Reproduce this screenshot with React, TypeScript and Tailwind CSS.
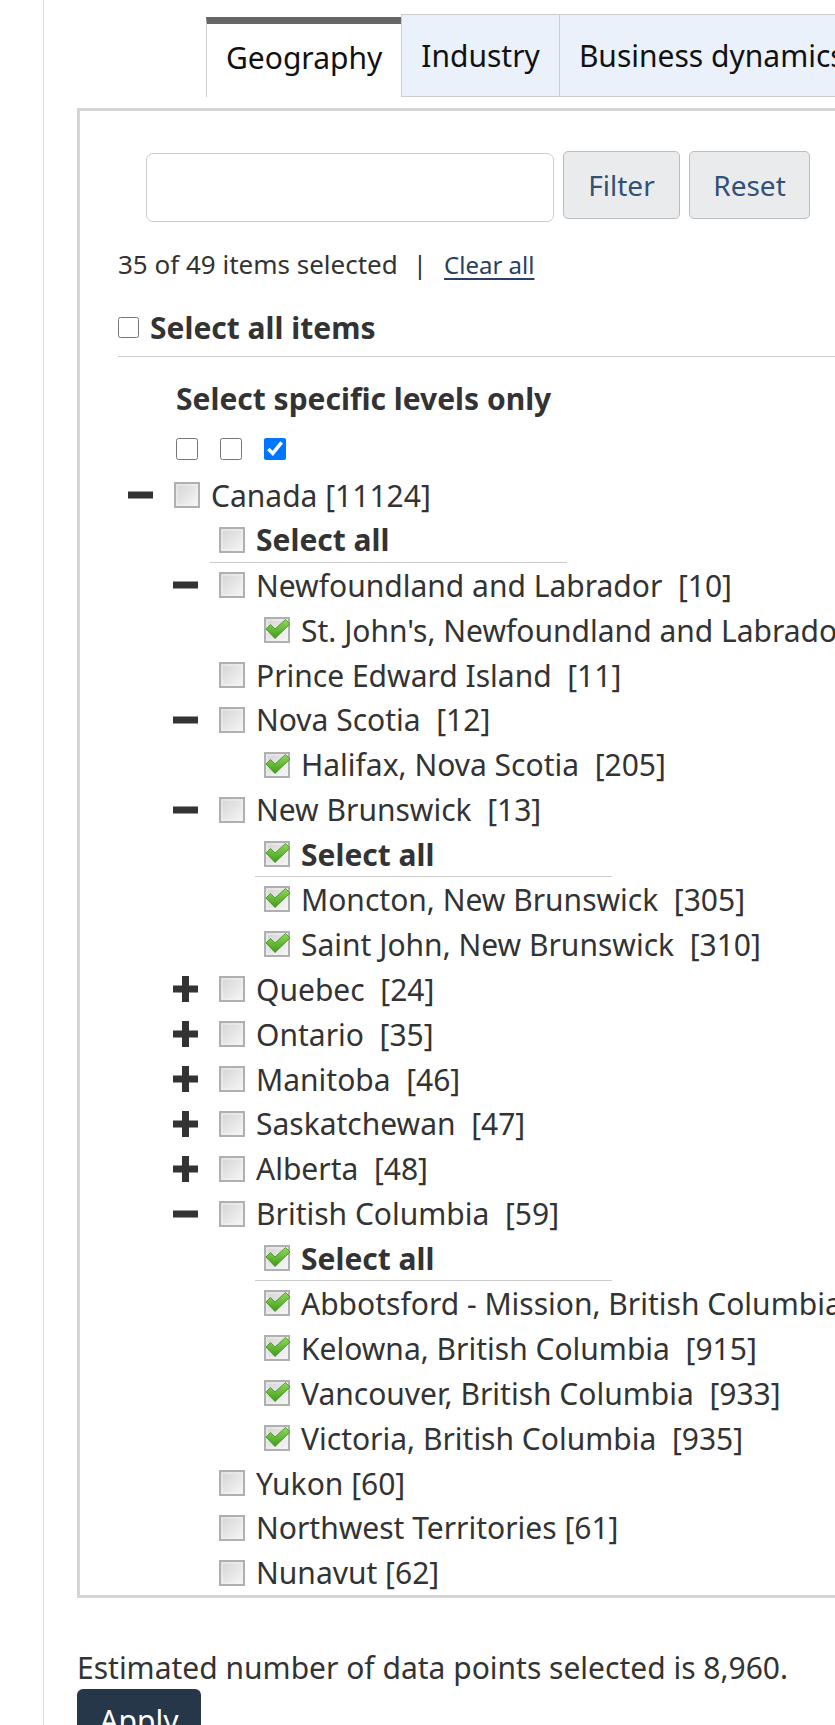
import React from "react";

type Row = {
  level: 1 | 2 | 3;
  toggle?: "minus" | "plus";
  kind?: "selectall";
  checked?: boolean;
  label?: string;
};

const rows: Row[] = [
  { level: 1, toggle: "minus", label: "Canada [11124]" },
  { level: 2, kind: "selectall" },
  { level: 2, toggle: "minus", label: "Newfoundland and Labrador  [10]" },
  { level: 3, checked: true, label: "St. John's, Newfoundland and Labrador  [1]" },
  { level: 2, label: "Prince Edward Island  [11]" },
  { level: 2, toggle: "minus", label: "Nova Scotia  [12]" },
  { level: 3, checked: true, label: "Halifax, Nova Scotia  [205]" },
  { level: 2, toggle: "minus", label: "New Brunswick  [13]" },
  { level: 3, kind: "selectall", checked: true },
  { level: 3, checked: true, label: "Moncton, New Brunswick  [305]" },
  { level: 3, checked: true, label: "Saint John, New Brunswick  [310]" },
  { level: 2, toggle: "plus", label: "Quebec  [24]" },
  { level: 2, toggle: "plus", label: "Ontario  [35]" },
  { level: 2, toggle: "plus", label: "Manitoba  [46]" },
  { level: 2, toggle: "plus", label: "Saskatchewan  [47]" },
  { level: 2, toggle: "plus", label: "Alberta  [48]" },
  { level: 2, toggle: "minus", label: "British Columbia  [59]" },
  { level: 3, kind: "selectall", checked: true },
  { level: 3, checked: true, label: "Abbotsford - Mission, British Columbia  [932]" },
  { level: 3, checked: true, label: "Kelowna, British Columbia  [915]" },
  { level: 3, checked: true, label: "Vancouver, British Columbia  [933]" },
  { level: 3, checked: true, label: "Victoria, British Columbia  [935]" },
  { level: 2, label: "Yukon [60]" },
  { level: 2, label: "Northwest Territories [61]" },
  { level: 2, label: "Nunavut [62]" },
];

function Box({ checked }: { checked?: boolean }) {
  return (
    <svg width="26" height="26" viewBox="0 0 26 26" className="shrink-0 block overflow-visible">
      <defs>
        <linearGradient id="boxg" x1="0" y1="0" x2="1" y2="1">
          <stop offset="0" stopColor="#d2d2d2" />
          <stop offset="1" stopColor="#f8f8f8" />
        </linearGradient>
        <linearGradient id="chkg" x1="0" y1="0" x2="0" y2="1">
          <stop offset="0" stopColor="#93d95a" />
          <stop offset="1" stopColor="#3e9c18" />
        </linearGradient>
      </defs>
      <rect x="1" y="1" width="24" height="24" fill="url(#boxg)" stroke="#b0b0b0" strokeWidth="2" />
      <rect x="3" y="3" width="20" height="20" fill="none" stroke="#f2f2f2" strokeWidth="1" />
      {checked && (
        <path
          d="M2 12 L6.5 7.5 L11 12 L21.5 2.5 L26 7 L11 21.5 Z"
          fill="url(#chkg)"
          stroke="#3b8a1c"
          strokeWidth="0.8"
          strokeLinejoin="round"
        />
      )}
    </svg>
  );
}

function Toggle({ t }: { t?: "minus" | "plus" }) {
  if (t === "minus")
    return (
      <svg width="25" height="26" viewBox="0 0 25 26" className="shrink-0 block">
        <rect x="0" y="9.5" width="25" height="7" fill="#333" />
      </svg>
    );
  if (t === "plus")
    return (
      <svg width="25" height="26" viewBox="0 0 25 26" className="shrink-0 block">
        <rect x="0" y="9.5" width="25" height="7" fill="#333" />
        <rect x="9" y="0" width="7" height="26" fill="#333" />
      </svg>
    );
  return <div className="w-[25px] shrink-0" />;
}

function TreeRow({ r }: { r: Row }) {
  if (r.kind === "selectall") {
    const pad = r.level === 2 ? "pl-[130px]" : "pl-[175px]";
    return (
      <div className={`h-[44.9px] flex ${pad}`}>
        <div className="w-[357px] h-full border-b border-[#cccccc] pl-[9px] flex items-center">
          <Box checked={r.checked} />
          <span className="ml-[11px] font-bold">Select all</span>
        </div>
      </div>
    );
  }
  const pad = r.level === 1 ? "pl-[48px]" : r.level === 2 ? "pl-[93px]" : "pl-[138px]";
  return (
    <div className={`h-[44.9px] flex items-center ${pad}`}>
      <Toggle t={r.toggle} />
      <div className="ml-[21px]">
        <Box checked={r.checked} />
      </div>
      <span className="ml-[11px] whitespace-pre">{r.label}</span>
    </div>
  );
}

export default function App() {
  return (
    <div className="w-[835px] h-[1725px] overflow-hidden bg-white font-['Noto_Sans',sans-serif] text-[#333333]">
      <div className="ml-[43px] h-full border-l border-[#dddddd] pl-[33px]">
        <div className="w-[800px]">
          {/* Tabs */}
          <div className="flex items-end ml-[129px] pt-[14px] text-[30px] text-[#111]">
            <div className="h-[80px] bg-white border-t-[7px] border-t-[#666666] border-l border-l-[#cccccc] px-[19px] pb-[6px] flex items-center whitespace-nowrap">
              Geography
            </div>
            <div className="h-[83px] bg-[#eaf1fa] border border-[#cccccc] px-[19px] flex items-center whitespace-nowrap">
              Industry
            </div>
            <div className="h-[83px] bg-[#eaf1fa] border border-l-0 border-[#cccccc] px-[19px] flex items-center whitespace-nowrap">
              Business dynamics
            </div>
          </div>

          {/* Panel */}
          <div className="mt-[11px] border-[3px] border-[#d5d5d5] bg-white text-[30px]">
            <div className="flex items-start mt-[40px] ml-[66px] gap-[9px]">
              <div className="mt-[2px] w-[408px] h-[69px] border border-[#cccccc] rounded-[7px] bg-white" />
              <button className="w-[117px] h-[68px] bg-[#eaebed] border border-[#b9bcc1] rounded-[5px] text-[28px] text-[#335075]">
                Filter
              </button>
              <button className="w-[121px] h-[68px] bg-[#eaebed] border border-[#b9bcc1] rounded-[5px] text-[28px] text-[#335075]">
                Reset
              </button>
            </div>

            <div className="mt-[23px] ml-[38px] text-[26px] leading-[39px] whitespace-nowrap flex items-center">
              <span>35 of 49 items selected</span>
              <span className="ml-[15px] mr-[17px]">|</span>
              <span className="underline text-[#284162] text-[24px] underline-offset-[4px]">Clear all</span>
            </div>

            <div className="mt-[23px] ml-[38px] h-[40px] flex items-center">
              <input type="checkbox" readOnly className="m-0 w-[21px] h-[21px]" />
              <span className="ml-[11px] font-bold text-[30px]">Select all items</span>
            </div>

            <div className="mt-[9px] ml-[38px] h-px bg-[#cccccc]" />

            <div className="mt-[19px] ml-[96px] font-bold text-[30px] leading-[45px] whitespace-nowrap">
              Select specific levels only
            </div>

            <div className="mt-[17px] ml-[96px] flex gap-[22px] h-[22px]">
              <input type="checkbox" readOnly className="m-0 w-[22px] h-[22px]" />
              <input type="checkbox" readOnly className="m-0 w-[22px] h-[22px]" />
              <input type="checkbox" readOnly checked className="m-0 w-[22px] h-[22px]" />
            </div>

            <div className="mt-[13px] whitespace-nowrap">
              {rows.map((r, i) => (
                <TreeRow key={i} r={r} />
              ))}
            </div>
          </div>

          <div className="mt-[48px] text-[30px] leading-[43px] whitespace-nowrap">
            Estimated number of data points selected is 8,960.
          </div>
          <button className="w-[124px] h-[64px] bg-[#26374a] rounded-[6px] text-white text-[30px] pb-[2px]">
            Apply
          </button>
        </div>
      </div>
    </div>
  );
}
